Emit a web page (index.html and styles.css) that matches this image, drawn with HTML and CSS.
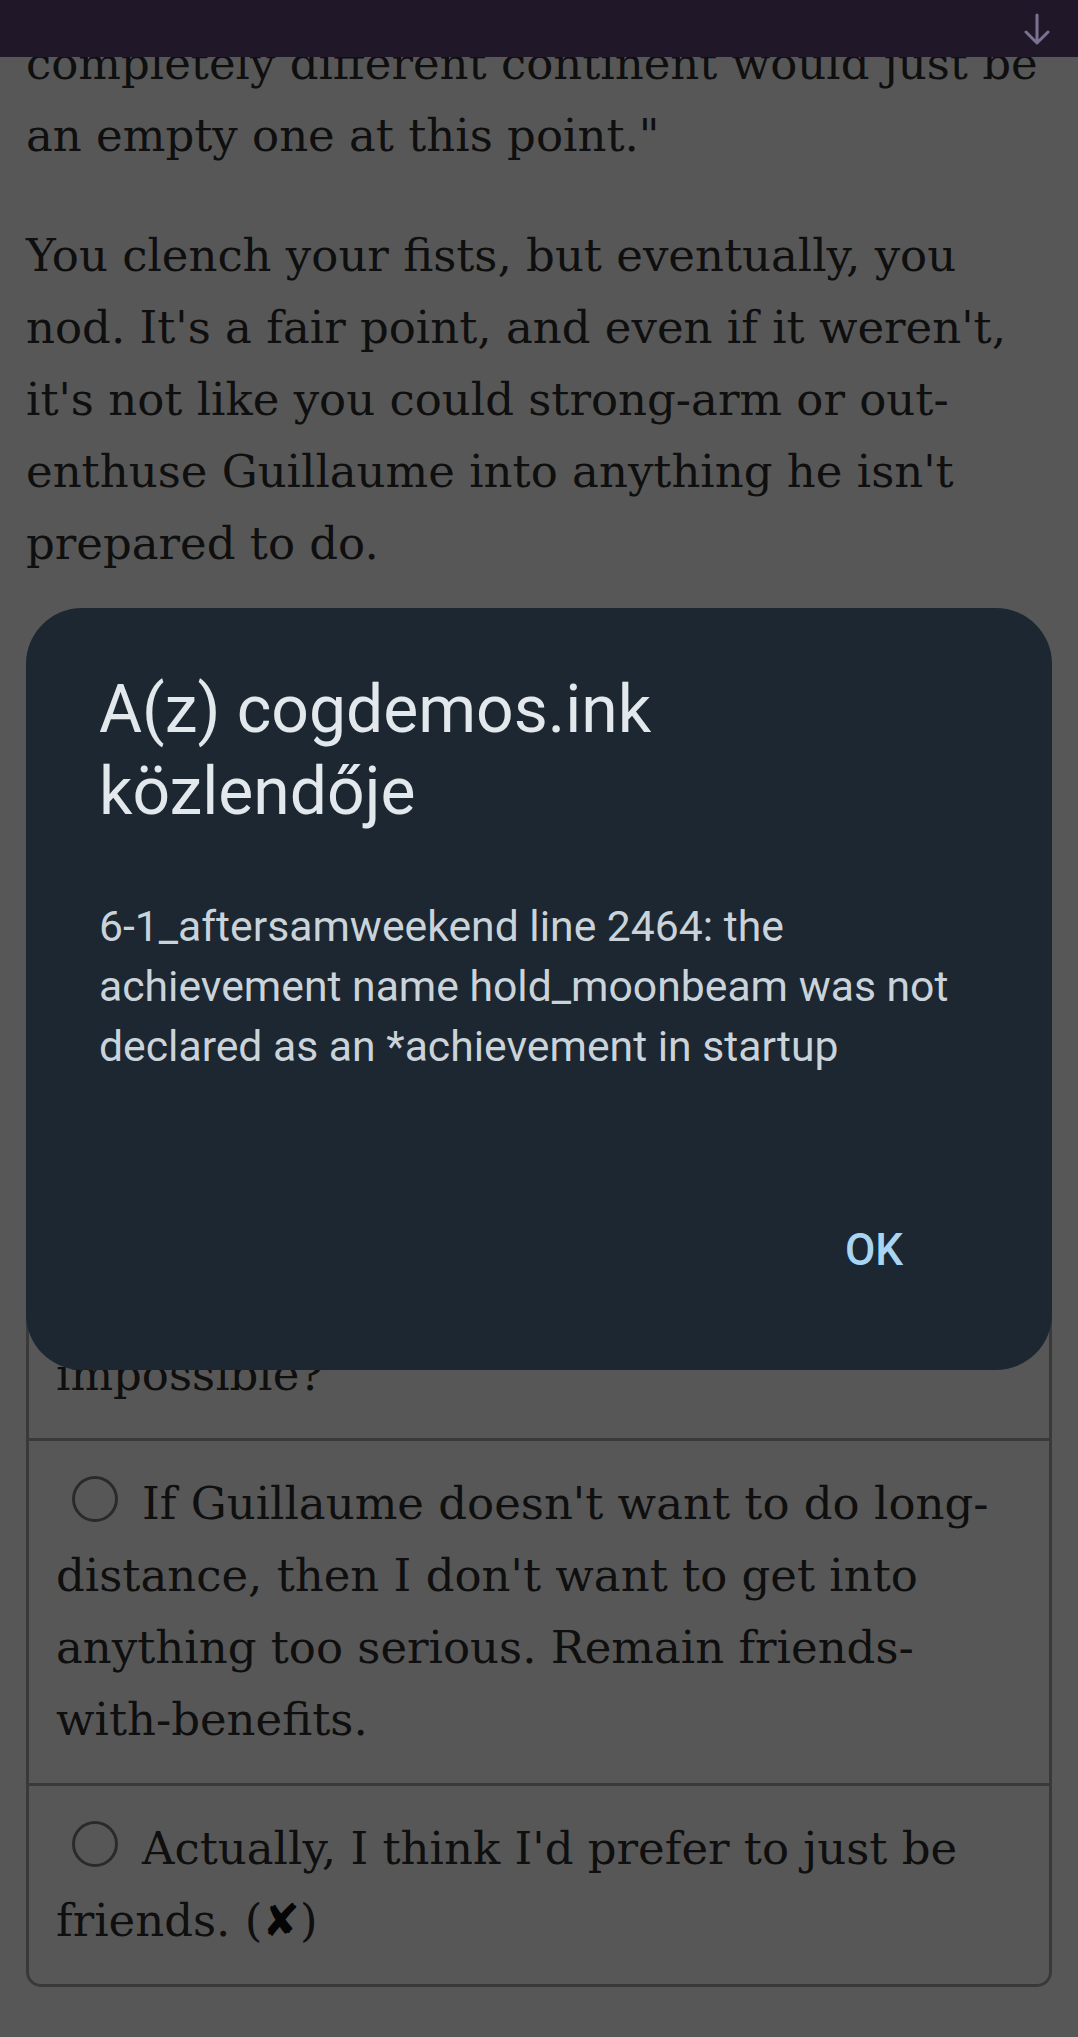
FILE: index.html
```html
<!DOCTYPE html>
<html lang="en">
<head>
<meta charset="UTF-8">
<meta name="viewport" content="width=device-width, initial-scale=1.0">
<title>cogdemos.ink</title>
<link rel="stylesheet" href="styles.css">
</head>
<body>

  <div class="top-bar">
    <svg class="top-bar__arrow" width="28" height="32" viewBox="0 0 28 32">
      <path d="M14 2 V30 M3 19 L14 30 L25 19" fill="none" stroke="#7a7290" stroke-width="3" stroke-linecap="round" stroke-linejoin="round"/>
    </svg>
  </div>

  <main class="story">
    <p>completely different continent would just be an empty one at this point."</p>
    <p>You clench your fists, but eventually, you nod. It's a fair point, and even if it weren't, it's not like you could strong-arm or out-enthuse Guillaume into anything he isn't prepared to do.</p>

    <form class="choices">
      <label class="choice"><input class="choice__radio" type="radio" name="choice">Tell him you don't care about the distance. People make it work all the time, and the two of you have survived worse than an ocean and a few time zones. Calls every night, visits every holiday, and plane tickets aren't that expensive if you plan ahead. Why does he insist on treating it like it's completely and utterly<br>impossible?</label>
      <label class="choice"><input class="choice__radio" type="radio" name="choice">If Guillaume doesn't want to do long-distance, then I don't want to get into anything too serious. Remain friends-with-benefits.</label>
      <label class="choice"><input class="choice__radio" type="radio" name="choice">Actually, I think I'd prefer to just be friends. (<span class="choice__mark">✘</span>)</label>
    </form>
  </main>

  <div class="scrim"></div>

  <div class="dialog">
    <h2 class="dialog__title">A(z) cogdemos.ink közlendője</h2>
    <p class="dialog__text">6-1_aftersamweekend line 2464: the achievement name hold_moonbeam was not declared as an *achievement in startup</p>
    <div class="dialog__actions">
      <button class="dialog__ok">OK</button>
    </div>
  </div>

</body>
</html>
```

FILE: styles.css
```css
body {
  margin: 0;
  padding: 0;
  height: 2037px;
  overflow: hidden;
  background-color: #ffffff;
  color: #2e2e2e;
  font-family: "DejaVu Serif", serif;
}

.top-bar {
  position: fixed;
  top: 0;
  left: 0;
  right: 0;
  height: 57px;
  background-color: #201828;
  display: flex;
  justify-content: flex-end;
  align-items: center;
  padding-right: 27px;
  z-index: 3;
}

.story {
  padding: 28px 26px 0;
}

.story p {
  margin: 0 0 48px;
  font-size: 45px;
  line-height: 72px;
}

.choices {
  margin: 81px 0 0;
  border: 3px solid #a6a6a6;
  border-radius: 15px;
}

.choice {
  display: block;
  padding: 27px 40px 27px 27px;
  font-size: 45px;
  line-height: 72px;
}

.choice + .choice {
  border-top: 3px solid #a6a6a6;
}

.choice__radio {
  appearance: none;
  -webkit-appearance: none;
  box-sizing: border-box;
  width: 46px;
  height: 46px;
  margin: 8px 24px 0 16px;
  border: 3px solid #7c7c7c;
  border-radius: 50%;
  background: #ffffff;
  vertical-align: top;
}

.choice__mark {
  font-family: "DejaVu Sans", sans-serif;
  font-weight: bold;
  color: #111111;
}

.scrim {
  position: fixed;
  top: 0;
  left: 0;
  right: 0;
  bottom: 0;
  background-color: rgba(0, 0, 0, 0.66);
  z-index: 1;
}

.dialog {
  position: fixed;
  top: 608px;
  left: 26px;
  right: 26px;
  height: 762px;
  box-sizing: border-box;
  padding: 61px 73px 0;
  background-color: #1c2731;
  border-radius: 56px;
  font-family: Roboto, "Noto Sans", sans-serif;
  z-index: 2;
}

.dialog__title {
  margin: 0;
  padding-right: 80px;
  font-size: 66px;
  font-weight: 400;
  line-height: 82px;
  color: #e3e8ec;
}

.dialog__text {
  margin: 63px 0 0;
  font-size: 42.7px;
  line-height: 60px;
  color: #cbd3da;
}

.dialog__actions {
  display: flex;
  justify-content: flex-end;
  margin: 144px 52px 0 0;
}

.dialog__ok {
  padding: 0 24px;
  border: none;
  background: none;
  color: #a8d5f4;
  font-family: Roboto, sans-serif;
  font-size: 44px;
  font-weight: 500;
  line-height: 60px;
  cursor: pointer;
}
```
